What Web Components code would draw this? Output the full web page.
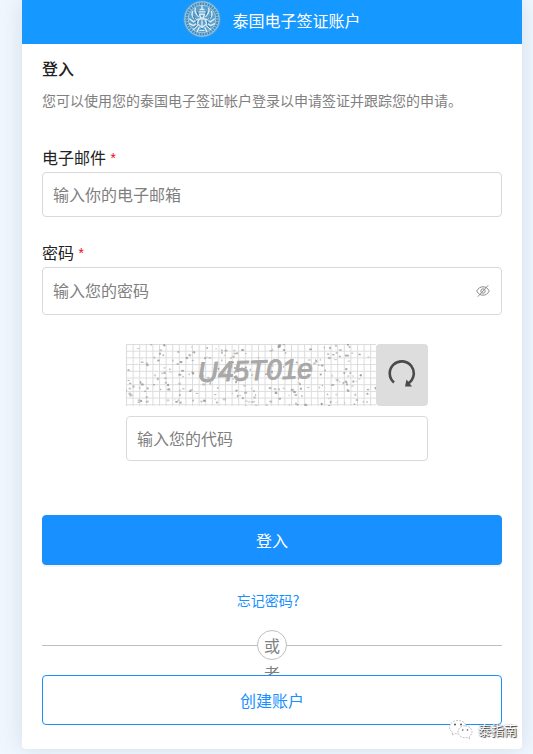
<!DOCTYPE html>
<html lang="zh-CN">
<head>
<meta charset="utf-8">
<meta name="viewport" content="width=device-width, initial-scale=1">
<title>泰国电子签证账户</title>
<style>
    :root {
        --primary: #1890ff;
        --header: #1598ff;
        --text: #222;
        --muted: #808080;
        --border: #d9d9d9;
        --radius: 4px;
    }

    body {
        margin: 0;
        min-height: 100vh;
        background: #f0f7ff;
        color: var(--text);
        font: 16px/24px "Noto Sans CJK SC", sans-serif;
        overflow-x: hidden;
    }
</style>
</head>
<body>
<login-card heading="泰国电子签证账户">
    <section-title text="登入">您可以使用您的泰国电子签证帐户登录以申请签证并跟踪您的申请。</section-title>
    <form-field label="电子邮件" type="email" placeholder="输入你的电子邮箱"></form-field>
    <form-field label="密码" type="password" placeholder="输入您的密码"></form-field>
    <captcha-box code="U45T01e" placeholder="输入您的代码"></captcha-box>
    <action-button>登入</action-button>
    <text-link href="#forgot">忘记密码?</text-link>
    <or-divider>或者</or-divider>
    <action-button outline>创建账户</action-button>
</login-card>
<account-mark>泰指南</account-mark>

<script>
class BaseElement extends HTMLElement {
    constructor() {
        super();
        this.attachShadow({ mode: 'open' });
    }

    connectedCallback() {
        this.render();
    }
}

class ThaiSeal extends BaseElement {
    render() {
        let teeth = '';
        for (let i = 0; i < 36; i++) {
            teeth += `<path d="M20 2.4v2.4" transform="rotate(${i * 10} 20 20)"/>`;
        }

        this.shadowRoot.innerHTML = `
            <style>
                :host { display: block; width: 38px; height: 38px; }
                svg { display: block; width: 100%; height: 100%; }
            </style>
            <svg viewBox="0 0 40 40" fill="none" aria-hidden="true">
                <circle cx="20" cy="20" r="19.5" fill="#5fa3d0"/>
                <circle cx="20" cy="20" r="18" fill="#3d88bd" stroke="#a4cde5"/>
                <g stroke="#8fc0dd" stroke-width="1.2">${teeth}</g>
                <circle cx="20" cy="20" r="14.6" fill="#5c9fca" stroke="#a7cfe4"/>
                <!-- figure with raised arms under a tiered crown -->
                <g stroke="#dcecf4" stroke-width="1.5" stroke-linecap="round" stroke-linejoin="round">
                    <path d="M20 6v4M18 10h4M17 12.5h6M17.5 15h5l-1 4h-3z"/>
                    <path d="M16 17c-3-3-4-6-3-8M24 17c3-3 4-6 3-8M13 20c-4-2-4-5-3-8M27 20c4-2 4-5 3-8"/>
                    <path d="M16 20l-5 3-4-3M24 20l5 3 4-3M15 24l-4 3-4-2M25 24l4 3 4-2"/>
                    <path d="M17 20h6l2 5-5 4-5-4zM20 22v5M15 27l-4 4M25 27l4 4M17 29l-2 4M23 29l2 4M18 32h4"/>
                </g>
                <g stroke="#266fa5" stroke-width="1" stroke-linecap="round">
                    <path d="M15 13l1 3M25 13l-1 3M11 17l2 4M29 17l-2 4M14 22v3M26 22v3M20 30v1M12 29l2-2M28 29l-2-2"/>
                </g>
            </svg>
        `;
    }
}

class LoginCard extends BaseElement {
    render() {
        this.shadowRoot.innerHTML = `
            <style>
                :host {
                    display: block;
                    margin: 0 11px 0 22px;
                    background: #fff;
                    border-radius: 0 0 var(--radius) var(--radius);
                    box-shadow: 0 0 24px rgba(80, 110, 130, 0.18);
                }
                header {
                    display: flex;
                    align-items: flex-start;
                    justify-content: center;
                    gap: 11px;
                    height: 44px;
                    background: var(--header);
                    color: #fff;
                }
                h1 {
                    margin: 0;
                    padding-top: 8px;
                    font-size: 16px;
                    line-height: 24px;
                    font-weight: 400;
                }
                main {
                    display: flex;
                    flex-direction: column;
                    padding: 12px 20px 24px;
                }
            </style>
            <header>
                <thai-seal></thai-seal>
                <h1>${this.getAttribute('heading')}</h1>
            </header>
            <main><slot></slot></main>
        `;
    }
}

class SectionTitle extends BaseElement {
    render() {
        this.shadowRoot.innerHTML = `
            <style>
                :host { display: block; margin-bottom: 34px; }
                h2 { margin: 0 0 9px; font-size: 16px; line-height: 24px; font-weight: 500; }
                p { margin: 0; font-size: 14px; line-height: 22px; color: var(--muted); }
            </style>
            <h2>${this.getAttribute('text')}</h2>
            <p><slot></slot></p>
        `;
    }
}

class FormField extends BaseElement {
    render() {
        const type = this.getAttribute('type');
        const isPassword = type === 'password';

        this.shadowRoot.innerHTML = `
            <style>
                :host { display: block; margin-bottom: 23px; }
                label { display: block; height: 24px; margin-bottom: 3px; line-height: 24px; }
                .required { margin-left: 3px; font: 14px/24px "Liberation Mono", monospace; color: #f00a14; }
                .box {
                    display: flex;
                    align-items: center;
                    box-sizing: border-box;
                    height: ${isPassword ? 48 : 45}px;
                    padding: 0 11px 0 10px;
                    border: 1px solid var(--border);
                    border-radius: var(--radius);
                }
                .box:focus-within { border-color: var(--primary); }
                input {
                    flex: 1;
                    min-width: 0;
                    padding: 0 0 2px;
                    border: 0;
                    outline: 0;
                    background: none;
                    color: inherit;
                    font: inherit;
                }
                input::placeholder { color: var(--muted); opacity: 1; }
                button { display: flex; padding: 0; border: 0; background: none; color: #8c8c8c; cursor: pointer; }
            </style>
            <label for="input">${this.getAttribute('label')}<span class="required">*</span></label>
            <div class="box">
                <input id="input" type="${type}" placeholder="${this.getAttribute('placeholder')}">
                ${isPassword ? `
                <button type="button" aria-label="显示密码">
                    <svg width="14" height="14" viewBox="0 0 14 14" fill="none" stroke="currentColor">
                        <path d="M.7 7C2.2 4.2 4.3 2.8 7 2.8S11.8 4.2 13.3 7C11.8 9.8 9.7 11.2 7 11.2S2.2 9.8.7 7z"/>
                        <circle cx="7" cy="7" r="2.2"/>
                        <path d="M12.2 1.3L1.8 12.7"/>
                    </svg>
                </button>` : ''}
            </div>
        `;

        if (isPassword) {
            const input = this.shadowRoot.querySelector('input');
            this.shadowRoot.querySelector('button').addEventListener('click', () => {
                input.type = input.type === 'password' ? 'text' : 'password';
            });
        }
    }
}

class CaptchaBox extends BaseElement {
    // small seeded generator, so the speckles stay put between renders
    speckles() {
        let seed = 7731;
        const rand = () => {
            seed = (seed * 16807) % 2147483647;
            return seed / 2147483647;
        };
        let out = '';
        for (let i = 0; i < 250; i++) {
            const x = (rand() * 250).toFixed(1);
            const y = (rand() * 62).toFixed(1);
            const rx = (0.6 + rand() * 1.1).toFixed(1);
            const ry = (0.6 + rand() * 0.8).toFixed(1);
            out += `<ellipse cx="${x}" cy="${y}" rx="${rx}" ry="${ry}" opacity="${(0.4 + rand() * 0.5).toFixed(1)}"/>`;
        }
        return out;
    }

    render() {
        this.shadowRoot.innerHTML = `
            <style>
                :host {
                    display: grid;
                    grid-template-columns: 1fr 52px;
                    row-gap: 10px;
                    box-sizing: border-box;
                    width: 312px;
                    max-width: 100%;
                    margin: 6px auto 54px;
                    padding-left: 10px;
                }
                .code { display: block; width: 100%; height: 62px; }
                .code text {
                    font: italic 400 28px "Liberation Sans", sans-serif;
                    fill: #a8a8a8;
                    stroke: #a8a8a8;
                    stroke-width: 1px;
                }
                button {
                    display: flex;
                    align-items: center;
                    justify-content: center;
                    padding: 0;
                    border: 0;
                    border-radius: var(--radius);
                    background: #ddd;
                    cursor: pointer;
                }
                input {
                    grid-column: 1 / -1;
                    box-sizing: border-box;
                    width: 100%;
                    height: 45px;
                    padding: 0 10px 2px;
                    border: 1px solid var(--border);
                    border-radius: var(--radius);
                    outline: 0;
                    color: inherit;
                    font: inherit;
                }
                input:focus { border-color: var(--primary); }
                input::placeholder { color: var(--muted); opacity: 1; }
            </style>
            <svg class="code" viewBox="0 0 250 62">
                <defs>
                    <pattern id="grid" width="6.6" height="6.7" patternUnits="userSpaceOnUse">
                        <path d="M.5 0v6.7M0 .5h6.6" stroke="#dcdcdc" fill="none"/>
                    </pattern>
                </defs>
                <rect width="250" height="62" fill="url(#grid)"/>
                <g fill="#999">${this.speckles()}</g>
                <text x="72" y="38" transform="rotate(-2 72 38)">${this.getAttribute('code')}</text>
            </svg>
            <button type="button" aria-label="刷新">
                <svg width="30" height="30" viewBox="0 0 30 30" fill="none">
                    <path d="M7 22.5A12 12 0 1 1 21 23.6" stroke="#4a4a4a" stroke-width="2.6"/>
                    <path d="M19.5 19.5L18 26.500h7z" fill="#4a4a4a"/>
                </svg>
            </button>
            <input type="text" aria-label="${this.getAttribute('placeholder')}" placeholder="${this.getAttribute('placeholder')}">
        `;
    }
}

class ActionButton extends BaseElement {
    render() {
        this.shadowRoot.innerHTML = `
            <style>
                :host { display: block; position: relative; }
                button {
                    display: block;
                    box-sizing: border-box;
                    width: 100%;
                    height: 50px;
                    padding: 0;
                    border: 1px solid var(--primary);
                    border-radius: var(--radius);
                    background: var(--primary);
                    box-shadow: 0 2px 0 rgba(0, 0, 0, 0.045);
                    color: #fff;
                    font: inherit;
                    cursor: pointer;
                }
                :host([outline]) button {
                    background: #fff;
                    box-shadow: none;
                    color: var(--primary);
                }
            </style>
            <button type="button"><slot></slot></button>
        `;
    }
}

class TextLink extends BaseElement {
    render() {
        this.shadowRoot.innerHTML = `
            <style>
                :host {
                    display: block;
                    margin: 24px 0 19px;
                    padding-right: 8px;
                    text-align: center;
                    font-size: 14px;
                    line-height: 22px;
                }
                a { color: var(--primary); text-decoration: none; }
                a:hover { text-decoration: underline; }
            </style>
            <a href="${this.getAttribute('href')}"><slot></slot></a>
        `;
    }
}

class OrDivider extends BaseElement {
    render() {
        this.shadowRoot.innerHTML = `
            <style>
                :host {
                    display: flex;
                    align-items: center;
                    height: 30px;
                    margin-bottom: 15px;
                    color: var(--muted);
                }
                :host::before, :host::after {
                    content: '';
                    flex: 1;
                    height: 1px;
                    background: #bfbfbf;
                }
                /* one character wide: the rest of the label runs on below the ring */
                span {
                    box-sizing: border-box;
                    width: 30px;
                    height: 30px;
                    padding: 0 6px;
                    border: 1px solid #bfbfbf;
                    border-radius: 50%;
                    line-height: 28px;
                    text-align: center;
                }
            </style>
            <span><slot></slot></span>
        `;
    }
}

class AccountMark extends BaseElement {
    render() {
        this.shadowRoot.innerHTML = `
            <style>
                :host {
                    position: absolute;
                    top: 720px;
                    right: 16px;
                    display: flex;
                    align-items: center;
                    gap: 5px;
                    height: 20px;
                    color: #fff;
                    font-size: 13px;
                    line-height: 20px;
                    text-shadow: 1px 1px 1px #333, 0 0 1px #555;
                }
                svg { display: block; }
            </style>
            <svg width="24" height="20" viewBox="0 0 24 20" fill="#fff" stroke="#aaa" stroke-width=".7" stroke-dasharray="2 1" aria-hidden="true">
                <path d="M9 .5C4.3.5.5 3.5.5 7.3c0 2.2 1.2 4 3.2 5.2L3 15l3-1.5c1 .3 2 .4 3 .4 4.7 0 8.500-3 8.500-6.700S13.700.5 9 .5z"/>
                <path d="M16 5.800c-4 0-7 2.700-7 6s3 6 7 6c.8 0 1.600-.1 2.300-.3l2.700 1.500-.7-2.300c1.700-1.100 2.700-2.900 2.700-4.900 0-3.300-3-6-7-6z"/>
                <g fill="#555" stroke="none">
                    <circle cx="6" cy="4.500" r="1"/><circle cx="12" cy="4.500" r="1"/>
                    <circle cx="13.700" cy="10" r=".8"/><circle cx="18.500" cy="10" r=".8"/>
                </g>
            </svg>
            <slot></slot>
        `;
    }
}

customElements.define('thai-seal', ThaiSeal);
customElements.define('login-card', LoginCard);
customElements.define('section-title', SectionTitle);
customElements.define('form-field', FormField);
customElements.define('captcha-box', CaptchaBox);
customElements.define('action-button', ActionButton);
customElements.define('text-link', TextLink);
customElements.define('or-divider', OrDivider);
customElements.define('account-mark', AccountMark);
</script>
</body>
</html>
